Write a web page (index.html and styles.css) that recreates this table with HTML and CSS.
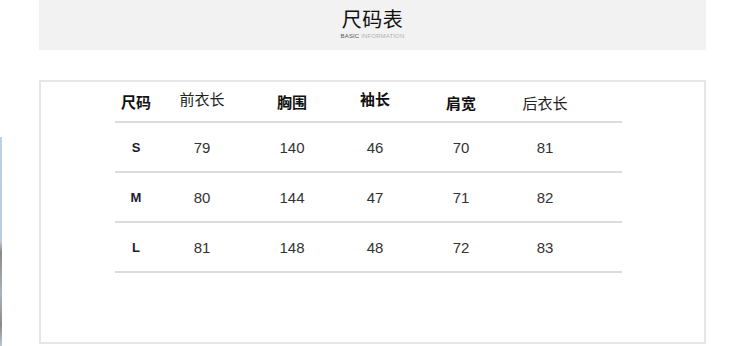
FILE: index.html
```html
<!DOCTYPE html>
<html lang="zh">
<head>
<meta charset="utf-8">
<title>尺码表</title>
<link rel="stylesheet" href="styles.css">
</head>
<body>
<div class="edge-strip"></div>
<div class="page">
  <header class="banner">
    <h1 class="title">尺码表</h1>
    <p class="subtitle"><span class="sub-dark">BASIC</span> INFORMATION</p>
  </header>
  <section class="box">
    <div class="table">
      <div class="row head">
        <div class="cell b">尺码</div>
        <div class="cell up">前衣长</div>
        <div class="cell b">胸围</div>
        <div class="cell b up">袖长</div>
        <div class="cell b down">肩宽</div>
        <div class="cell down">后衣长</div>
        <div class="cell"></div>
      </div>
      <div class="row">
        <div class="cell size">S</div>
        <div class="cell">79</div>
        <div class="cell">140</div>
        <div class="cell">46</div>
        <div class="cell">70</div>
        <div class="cell">81</div>
        <div class="cell"></div>
      </div>
      <div class="row">
        <div class="cell size">M</div>
        <div class="cell">80</div>
        <div class="cell">144</div>
        <div class="cell">47</div>
        <div class="cell">71</div>
        <div class="cell">82</div>
        <div class="cell"></div>
      </div>
      <div class="row">
        <div class="cell size">L</div>
        <div class="cell">81</div>
        <div class="cell">148</div>
        <div class="cell">48</div>
        <div class="cell">72</div>
        <div class="cell">83</div>
        <div class="cell"></div>
      </div>
    </div>
  </section>
</div>
</body>
</html>
```

FILE: styles.css
```css
html, body {
  margin: 0;
  padding: 0;
  background: #ffffff;
}
body {
  width: 750px;
  height: 346px;
  overflow: hidden;
  position: relative;
  font-family: "Liberation Sans", "Noto Sans CJK SC", sans-serif;
  color: #333;
}
.edge-strip {
  position: absolute;
  left: 0;
  top: 137px;
  width: 2px;
  height: 209px;
  background: linear-gradient(to bottom, #bcd0e6 0%, #b8cce0 50%, #8c8a86 55%, #a7b4c0 75%, #8e8b84 90%, #b6c8da 100%);
}
.page {
  margin: 0 44px 0 39px;
  display: flex;
  flex-direction: column;
}
.banner {
  height: 50px;
  background: #f2f2f2;
  display: flex;
  flex-direction: column;
  align-items: center;
}
.title {
  margin: 6px 0 0 0;
  font-family: "Noto Sans CJK SC", sans-serif;
  font-weight: 400;
  font-size: 20px;
  line-height: 26px;
  color: #111;
  letter-spacing: 0.5px;
}
.subtitle {
  margin: 1px 0 0 0;
  font-family: "Liberation Sans", sans-serif;
  font-size: 6px;
  line-height: 7px;
  color: #b0b0b0;
  letter-spacing: 0.15px;
}
.sub-dark {
  color: #555;
}
.box {
  margin-top: 30px;
  height: 260px;
  border: 2px solid #e6e6e6;
  padding: 0 82px 0 74px;
}
.table {
  display: flex;
  flex-direction: column;
}
.row {
  display: grid;
  grid-template-columns: 42px 90px 90px 76px 96px 72px 1fr;
  height: 48px;
  align-items: center;
  border-bottom: 2px solid #dcdcdc;
  font-size: 15px;
  color: #333;
}
.row.head {
  height: 39px;
  font-family: "Noto Sans CJK SC", sans-serif;
  font-size: 15px;
  color: #222;
}
.cell {
  text-align: center;
  line-height: 18px;
}
.row:not(.head) .cell {
  padding-top: 2px;
}
.cell.b {
  font-weight: 700;
  color: #111;
}
.cell.up {
  margin-bottom: 5px;
}
.cell.down {
  margin-top: 3px;
}
.cell.size {
  font-weight: 700;
  font-size: 13px;
  color: #1a1a33;
}
```
